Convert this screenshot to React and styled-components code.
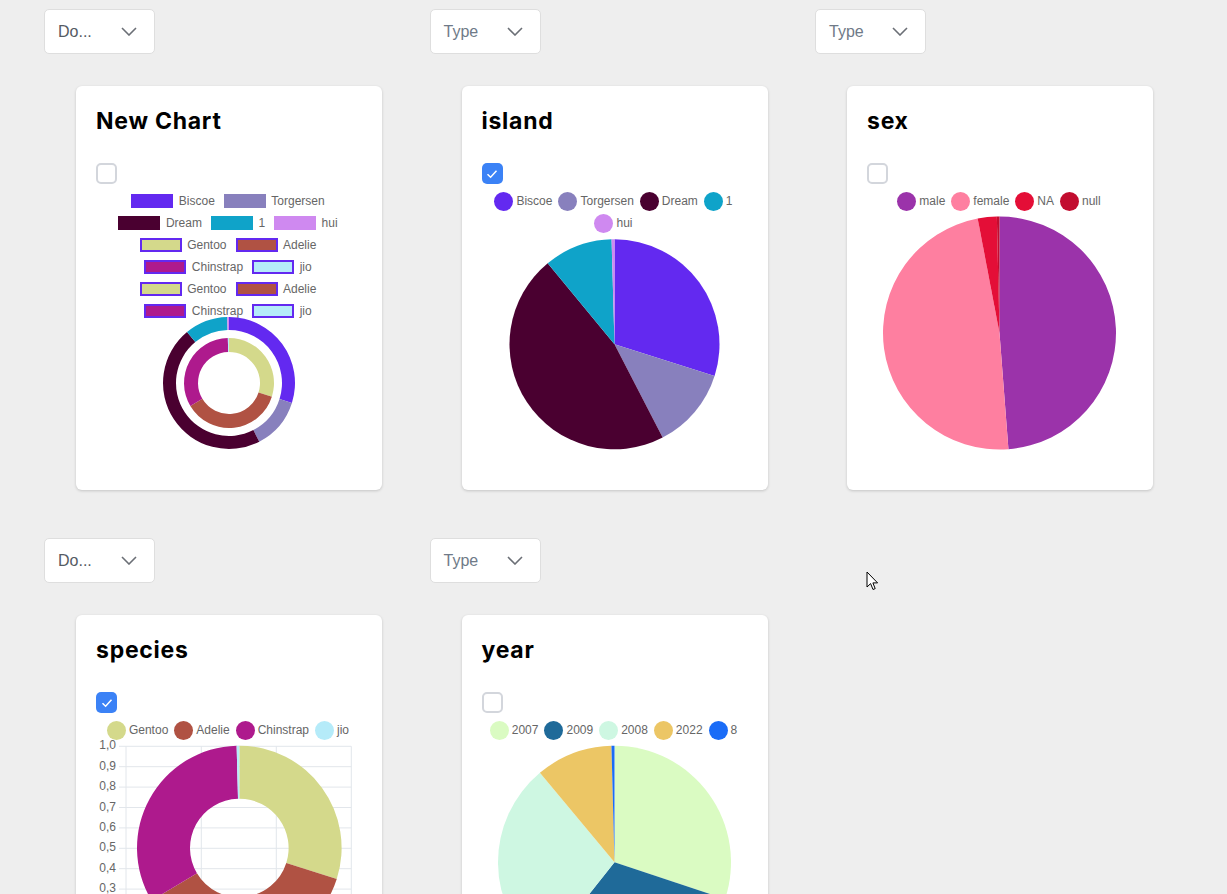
import React from 'react';
import styled, { createGlobalStyle } from 'styled-components';

const GlobalStyle = createGlobalStyle`
  html, body {
    margin : 0;
    padding : 0;
    background : #eeeeee;
    font-family : "Liberation Sans", Arial, sans-serif;
  }
`;

const colors = {
  page : '#eeeeee',
  legend : '#666666',
  grid : '#e2e6eb',
  check : '#3b82f6',
  outline : '#6329f0',
};

const Page = styled.div`
  position : relative;
  display : grid;
  grid-template-columns : repeat(3, 385.5px);
  row-gap : 48px;
  padding : 9px 0 40px 44px;
`;

const Cell = styled.div`
  display : flex;
  flex-direction : column;
  align-items : flex-start;
`;

const Select = styled.div`
  box-sizing : border-box;
  width : 111px;
  height : 45px;
  display : flex;
  align-items : center;
  justify-content : space-between;
  padding : 0 17px 0 13px;
  background : white;
  border : 1px solid #dedede;
  border-radius : 5px;
  font-size : 16px;
  color : ${p => (p.$placeholder ? '#6f7a88' : '#555b63')};
`;

const Card = styled.div`
  box-sizing : border-box;
  width : 306px;
  height : 404px;
  margin : 32px 0 0 32px;
  padding : 21px 20px 0 20px;
  background : white;
  border-radius : 6px;
  box-shadow : 0 1px 3px rgba(0, 0, 0, 0.18);
  overflow : hidden;
`;

const Title = styled.div`
  font-family : Inter, "Noto Sans", sans-serif;
  font-weight : 700;
  font-size : 23px;
  line-height : 28px;
  letter-spacing : 0.75px;
  color : #000;
`;

const CheckBox = styled.div`
  box-sizing : border-box;
  width : 21px;
  height : 21px;
  margin-top : 28px;
  border-radius : 5px;
  border : ${p => (p.$checked ? 'none' : '2px solid #d3d6dc')};
  background : ${p => (p.$checked ? colors.check : 'white')};
  display : flex;
  align-items : center;
  justify-content : center;
`;

const Legend = styled.div`
  margin-top : 6px;
  padding-right : 2px;
  display : flex;
  flex-direction : column;
`;

const LegendRow = styled.div`
  height : 22px;
  display : flex;
  justify-content : center;
  align-items : center;
  gap : ${p => (p.$dots ? '6px' : '9px')};
`;

const LegendItem = styled.div`
  display : flex;
  align-items : center;
  gap : ${p => (p.$dots ? '3px' : '5.5px')};
  font-size : 12px;
  line-height : 14px;
  color : ${colors.legend};
  white-space : nowrap;
`;

const Swatch = styled.span`
  box-sizing : border-box;
  display : block;
  flex : none;
  width : ${p => (p.$dot ? '19px' : '42px')};
  height : ${p => (p.$dot ? '19px' : '14px')};
  border-radius : ${p => (p.$dot ? '50%' : '0')};
  background : ${p => p.$color};
  border : ${p => (p.$outlined ? `2px solid ${colors.outline}` : 'none')};
`;

const Plot = styled.svg`
  display : block;
  overflow : visible;
`;

const Cursor = styled.svg`
  position : absolute;
  left : 866px;
  top : 571px;
`;

const polar = (cx, cy, r, deg) => {
  const a = ((deg - 90) * Math.PI) / 180;
  return [cx + r * Math.cos(a), cy + r * Math.sin(a)];
};

const slicePath = (cx, cy, r0, r1, a0, a1) => {
  const large = a1 - a0 > 180 ? 1 : 0;
  const [x0, y0] = polar(cx, cy, r1, a0);
  const [x1, y1] = polar(cx, cy, r1, a1);
  if (!r0) {
    return `M${cx} ${cy} L${x0} ${y0} A${r1} ${r1} 0 ${large} 1 ${x1} ${y1} Z`;
  }
  const [x2, y2] = polar(cx, cy, r0, a1);
  const [x3, y3] = polar(cx, cy, r0, a0);
  return `M${x0} ${y0} A${r1} ${r1} 0 ${large} 1 ${x1} ${y1} L${x2} ${y2} A${r0} ${r0} 0 ${large} 0 ${x3} ${y3} Z`;
};

const island = [
  { label : 'Biscoe', color : '#6329f0', deg : 107.6 },
  { label : 'Torgersen', color : '#8880bd', deg : 45.1 },
  { label : 'Dream', color : '#4a0030', deg : 167.8 },
  { label : '1', color : '#0fa3c9', deg : 37.9 },
  { label : 'hui', color : '#cf89f0', deg : 1.6 },
];

const species = [
  { label : 'Gentoo', color : '#d4d98b', deg : 107.7 },
  { label : 'Adelie', color : '#b05243', deg : 131.5 },
  { label : 'Chinstrap', color : '#ae1a8d', deg : 119.3 },
  { label : 'jio', color : '#b5ebf9', deg : 1.5 },
];

const sex = [
  { label : 'male', color : '#9b33aa', deg : 175.6 },
  { label : 'female', color : '#fe7fa0', deg : 173.6 },
  { label : 'NA', color : '#e40e37', deg : 9.5 },
  { label : 'null', color : '#c20d2f', deg : 1.3 },
];

const year = [
  { label : '2007', color : '#dafbc2', deg : 108.4 },
  { label : '2009', color : '#1f6a99', deg : 110 },
  { label : '2008', color : '#cef7e2', deg : 101.8 },
  { label : '2022', color : '#ecc665', deg : 38.3 },
  { label : '8', color : '#1a6cf7', deg : 1.5 },
];

const Slices = ({ data, cx, cy, r0, r1 }) => {
  let start = 0;
  return data.map(d => {
    const path = slicePath(cx, cy, r0, r1, start, start + d.deg);
    start += d.deg;
    return <path key={d.label} d={path} fill={d.color} />;
  });
};

const Chevron = () => (
  <svg width="16" height="9" viewBox="0 0 16 9">
    <path d="M1 1 L8 8 L15 1" fill="none" stroke="#6b6f76" strokeWidth="1.6" />
  </svg>
);

const Check = () => (
  <svg width="14" height="14" viewBox="0 0 14 14">
    <path d="M2.5 7.2 L5.6 10.2 L11.5 3.8" fill="none" stroke="white" strokeWidth="1.5" />
  </svg>
);

const LegendRows = ({ rows, dots }) => (
  <Legend>
    {rows.map((row, i) => (
      <LegendRow key={i} $dots={dots}>
        {row.map((item, j) => (
          <LegendItem key={j} $dots={dots}>
            <Swatch $dot={dots} $color={item.color} $outlined={item.outlined} />
            {item.label}
          </LegendItem>
        ))}
      </LegendRow>
    ))}
  </Legend>
);

const outlined = species.map(s => ({ ...s, outlined : true }));

const RingsChart = () => (
  <>
    <LegendRows
      rows={[
        island.slice(0, 2),
        island.slice(2),
        outlined.slice(0, 2),
        outlined.slice(2),
        outlined.slice(0, 2),
        outlined.slice(2),
      ]}
    />
    <Plot width="266" height="140">
      <Slices data={island} cx={133} cy={61} r0={53} r1={66} />
      <Slices data={species} cx={133} cy={61} r0={31} r1={45} />
    </Plot>
  </>
);

const PieChart = ({ data, rows, cy, r }) => (
  <>
    <LegendRows rows={rows} dots />
    <Plot width="266" height="250">
      <Slices data={data} cx={132.5} cy={cy} r0={0} r1={r} />
    </Plot>
  </>
);

const ticks = ['1,0', '0,9', '0,8', '0,7', '0,6', '0,5', '0,4', '0,3', '0,2', '0,1', '0,0'];

const AxisDonut = () => (
  <>
    <LegendRows rows={[species]} dots />
    <Plot width="266" height="250">
      {ticks.map((t, i) => {
        const y = 5.3 + i * 20.4;
        return (
          <g key={t}>
            <line x1="23" x2="255.3" y1={y} y2={y} stroke={colors.grid} />
            <text
              x="20"
              y={y}
              textAnchor="end"
              dominantBaseline="middle"
              fontSize="12"
              fill={colors.legend}
              fontFamily="Liberation Sans, Arial, sans-serif"
            >
              {t}
            </text>
          </g>
        );
      })}
      {[30, 105.3, 180.3, 255.3].map(x => (
        <line key={x} x1={x} x2={x} y1="5.3" y2="217" stroke={colors.grid} />
      ))}
      <Slices data={species} cx={143.3} cy={107} r0={49.3} r1={102.3} />
    </Plot>
  </>
);

const cards = [
  { select : 'Do...', title : 'New Chart', checked : false, chart : <RingsChart /> },
  {
    select : 'Type',
    placeholder : true,
    title : 'island',
    checked : true,
    chart : <PieChart data={island} rows={[island.slice(0, 4), island.slice(4)]} cy={110.3} r={105} />,
  },
  {
    select : 'Type',
    placeholder : true,
    title : 'sex',
    checked : false,
    chart : <PieChart data={sex} rows={[sex]} cy={121} r={116.5} />,
  },
  { select : 'Do...', title : 'species', checked : true, chart : <AxisDonut /> },
  {
    select : 'Type',
    placeholder : true,
    title : 'year',
    checked : false,
    chart : <PieChart data={year} rows={[year]} cy={121.3} r={116.5} />,
  },
];

export default function App() {
  return (
    <>
      <GlobalStyle />
      <Page>
        {cards.map(c => (
          <Cell key={c.title}>
            <Select $placeholder={c.placeholder}>
              <span>{c.select}</span>
              <Chevron />
            </Select>
            <Card>
              <Title>{c.title}</Title>
              <CheckBox $checked={c.checked}>{c.checked && <Check />}</CheckBox>
              {c.chart}
            </Card>
          </Cell>
        ))}
        <Cursor width="13" height="21" viewBox="0 0 13 21">
          <path d="M1 1 L1 16 L4.6 12.6 L7 18.5 L9.2 17.6 L6.9 11.9 L11.6 11.9 Z" fill="white" stroke="black" strokeWidth="1" />
        </Cursor>
      </Page>
    </>
  );
}
